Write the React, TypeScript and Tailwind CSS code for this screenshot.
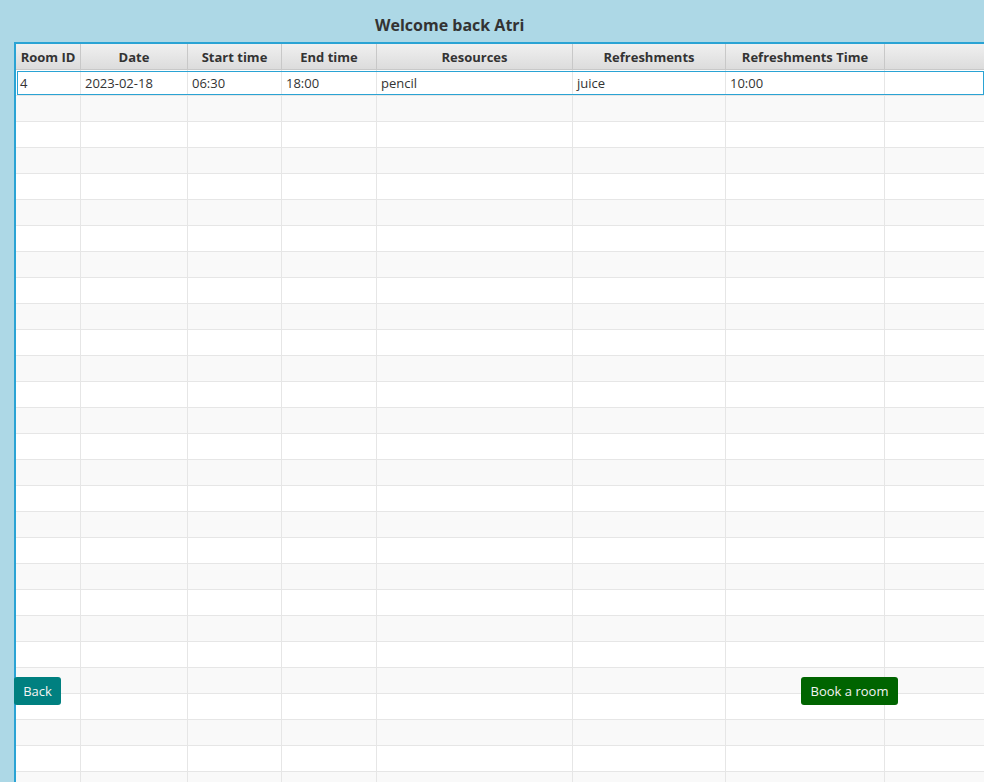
import React from "react";

const columns = [
  { label: "Room ID", width: 65 },
  { label: "Date", width: 107 },
  { label: "Start time", width: 94 },
  { label: "End time", width: 95 },
  { label: "Resources", width: 196 },
  { label: "Refreshments", width: 153 },
  { label: "Refreshments Time", width: 159 },
];

const bookings = [["4", "2023-02-18", "06:30", "18:00", "pencil", "juice", "10:00"]];

const EMPTY_ROWS = 27;

export default function App() {
  const rows: string[][] = [
    ...bookings,
    ...Array.from({ length: EMPTY_ROWS }, () => columns.map(() => "")),
  ];

  return (
    <div
      className="relative h-[782px] w-[984px] overflow-hidden bg-[#add8e6] text-[#333333]"
      style={{ fontFamily: '"Open Sans", "Noto Sans", sans-serif' }}
    >
      <div className="flex h-[42px] items-center pl-[375px] pt-[8px]">
        <h1 className="text-[16px] font-bold leading-none text-[#333333]">Welcome back Atri</h1>
      </div>

      <div className="ml-[14px] border-l-2 border-t-2 border-[#2aa3d4] bg-white">
        {/* header */}
        <div className="flex h-[26px] border-b border-[#c8c8c8] bg-gradient-to-b from-[#f0f0f0] to-[#dcdcdc]">
          {columns.map((c) => (
            <div
              key={c.label}
              style={{ width: c.width }}
              className="flex shrink-0 items-center justify-center border-r border-[#c8c8c8] pt-[2px] text-[13px] font-bold"
            >
              {c.label}
            </div>
          ))}
          <div className="flex-1" />
        </div>

        {/* body */}
        {rows.map((row, i) => (
          <div
            key={i}
            className={`relative flex h-[26px] border-b border-[#e6e6e6] ${
              i % 2 === 1 ? "bg-[#f9f9f9]" : "bg-white"
            }`}
          >
            {row.map((cell, j) => (
              <div
                key={j}
                style={{ width: columns[j].width }}
                className="flex shrink-0 items-center border-r border-[#e6e6e6] px-[4px] pt-[3px] text-[13px] text-[#333333]"
              >
                {cell}
              </div>
            ))}
            <div className="flex-1" />
            {i === 0 && (
              <div className="pointer-events-none absolute bottom-0 left-[1px] right-0 top-[1px] border border-[#2aa3d4]" />
            )}
          </div>
        ))}
      </div>

      <button className="absolute left-[14px] top-[677px] h-[28px] w-[47px] rounded-[3px] bg-[#008080] pt-[2px] text-[13px] text-[#f4f4f4]">
        Back
      </button>
      <button className="absolute left-[801px] top-[677px] h-[28px] w-[97px] rounded-[3px] bg-[#006400] pt-[2px] text-[13px] text-[#f4f4f4]">
        Book a room
      </button>
    </div>
  );
}
